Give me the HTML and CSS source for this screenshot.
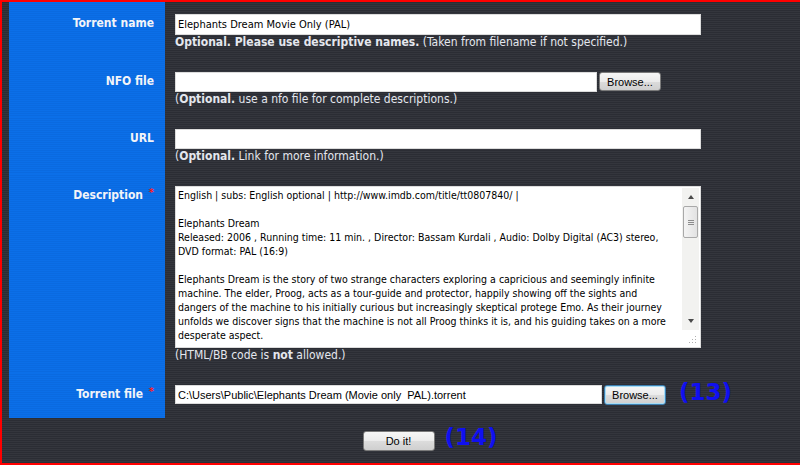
FILE: index.html
```html
<!DOCTYPE html>
<html lang="en">
<head>
    <meta charset="UTF-8">
    <title>Upload torrent</title>
    <link rel="stylesheet" href="styles.css">
</head>
<body>
    <div class="frame">
        <div class="upload">
            <div class="row">
                <div class="label">Torrent name</div>
                <div class="field">
                    <input type="text" class="text wide tall" value="Elephants Dream Movie Only (PAL)">
                    <div class="hint"><b>Optional. Please use descriptive names.</b> (Taken from filename if not specified.)</div>
                </div>
            </div>

            <div class="row">
                <div class="label">NFO file</div>
                <div class="field">
                    <div class="file-line">
                        <input type="text" class="text nfo" value="">
                        <button type="button" class="btn browse">Browse...</button>
                    </div>
                    <div class="hint">(<b>Optional.</b> use a nfo file for complete descriptions.)</div>
                </div>
            </div>

            <div class="row">
                <div class="label">URL</div>
                <div class="field">
                    <input type="text" class="text wide" value="">
                    <div class="hint">(<b>Optional.</b> Link for more information.)</div>
                </div>
            </div>

            <div class="row">
                <div class="label">Description <span class="req">*</span></div>
                <div class="field">
                    <div class="desc">
                        <div class="desc-text">
                            <div>English | subs: English optional | http://www.imdb.com/title/tt0807840/ |</div>
                            <div>&nbsp;</div>
                            <div>Elephants Dream</div>
                            <div>Released: 2006 , Running time: 11 min. , Director: Bassam Kurdali , Audio: Dolby Digital (AC3) stereo,</div>
                            <div>DVD format: PAL (16:9)</div>
                            <div>&nbsp;</div>
                            <div>Elephants Dream is the story of two strange characters exploring a capricious and seemingly infinite</div>
                            <div>machine. The elder, Proog, acts as a tour-guide and protector, happily showing off the sights and</div>
                            <div>dangers of the machine to his initially curious but increasingly skeptical protege Emo. As their journey</div>
                            <div>unfolds we discover signs that the machine is not all Proog thinks it is, and his guiding takes on a more</div>
                            <div>desperate aspect.</div>
                        </div>
                        <!-- fake scrollbar over the box -->
                        <div class="scrollbar">
                            <span class="arrow up"></span>
                            <span class="thumb"><i></i><i></i><i></i></span>
                            <span class="arrow down"></span>
                        </div>
                        <svg class="grip" width="9" height="9" viewBox="0 0 9 9">
                            <rect x="7" y="1" width="1" height="1" fill="#b0b0b0"/>
                            <rect x="4" y="4" width="1" height="1" fill="#b0b0b0"/>
                            <rect x="7" y="4" width="1" height="1" fill="#b0b0b0"/>
                            <rect x="1" y="7" width="1" height="1" fill="#b0b0b0"/>
                            <rect x="4" y="7" width="1" height="1" fill="#b0b0b0"/>
                            <rect x="7" y="7" width="1" height="1" fill="#b0b0b0"/>
                        </svg>
                    </div>
                    <div class="hint">(HTML/BB code is <b>not</b> allowed.)</div>
                </div>
            </div>

            <div class="row last">
                <div class="label">Torrent file <span class="req">*</span></div>
                <div class="field">
                    <div class="file-line">
                        <input type="text" class="text path" value="C:\Users\Public\Elephants Dream (Movie only  PAL).torrent">
                        <button type="button" class="btn browse focus">Browse...</button>
                        <span class="note">(13)</span>
                    </div>
                </div>
            </div>
        </div>

        <div class="submit-row">
            <div class="submit-wrap">
                <button type="button" class="btn do-it">Do it!</button>
                <span class="note note-14">(14)</span>
            </div>
        </div>
    </div>
</body>
</html>
```

FILE: styles.css
```css
html, body {
    margin: 0;
    padding: 0;
}
body {
    width: 800px;
    height: 465px;
    overflow: hidden;
    font-family: "DejaVu Sans Condensed", "DejaVu Sans", sans-serif;
}
.frame {
    box-sizing: border-box;
    height: 465px;
    border-top: 2px solid #ff0000;
    border-left: 2px solid #ff0000;
    border-bottom: 2px solid #ff0000;
    padding-left: 7px;
    background: repeating-linear-gradient(to bottom, #2b2d34 0, #2b2d34 1px, #34363d 1px, #34363d 2px);
}
.upload {
    display: flex;
    flex-direction: column;
}
.row {
    display: flex;
}
.label {
    box-sizing: border-box;
    width: 156px;
    flex: none;
    padding: 14px 11px 0 0;
    text-align: right;
    font-weight: bold;
    font-size: 12px;
    line-height: 15px;
    color: #f2f4f8;
    background: repeating-linear-gradient(to bottom, #0b6fe8 0, #0b6fe8 1px, #0a6ae0 1px, #0a6ae0 2px);
}
.req {
    position: relative;
    top: -3px;
    color: #ff1a1a;
    font-size: 11px;
    line-height: 0;
    margin-left: 2px;
}
.field {
    padding: 12px 0 10px 10px;
}
.row.last .field {
    padding-bottom: 12px;
}
.text {
    display: block;
    box-sizing: border-box;
    height: 20px;
    margin: 0;
    padding: 0 2px;
    border: 1px solid #dcdcdc;
    background: #fff;
    color: #000;
    font-family: "DejaVu Sans Condensed", "DejaVu Sans", sans-serif;
    font-size: 11px;
    outline: none;
}
.wide {
    width: 526px;
}
.tall {
    height: 21px;
}
.nfo {
    width: 422px;
}
.path {
    width: 427px;
    height: 19px;
    font-family: "Liberation Sans", Arial, sans-serif;
}
.file-line {
    display: flex;
    align-items: flex-start;
}
.hint {
    font-size: 12px;
    line-height: 15px;
    color: #e4e7ee;
    white-space: nowrap;
}
.btn {
    box-sizing: border-box;
    height: 19px;
    margin: 0;
    padding: 0;
    border: 1px solid #7a7a7a;
    border-radius: 3px;
    background: linear-gradient(to bottom, #f6f6f6 0%, #ebebeb 50%, #dcdcdc 51%, #cfcfcf 100%);
    color: #000;
    font-family: "Liberation Sans", Arial, sans-serif;
    font-size: 11px;
    cursor: pointer;
}
.browse {
    width: 62px;
    margin-left: 2px;
}
.browse.focus {
    border-color: #3c7fb1;
    box-shadow: inset 0 0 0 1px #a6dcf5;
    height: 20px;
}
.note {
    margin-left: 13px;
    margin-top: -6px;
    font-family: "DejaVu Sans", sans-serif;
    font-weight: bold;
    font-size: 23px;
    line-height: 27px;
    color: #1010f0;
}
.desc {
    position: relative;
    box-sizing: border-box;
    width: 526px;
    height: 162px;
    border: 1px solid #dcdcdc;
    background: #fff;
    overflow: hidden;
}
.desc-text {
    padding: 1px 0 0 2px;
    font-size: 10.5px;
    line-height: 14px;
    color: #000;
}
.desc-text div {
    white-space: nowrap;
}
.scrollbar {
    position: absolute;
    top: 1px;
    right: 1px;
    width: 17px;
    height: 142px;
    background: #f2f2f0;
    display: flex;
    flex-direction: column;
    align-items: center;
}
.arrow {
    width: 0;
    height: 0;
    border-left: 3px solid transparent;
    border-right: 3px solid transparent;
}
.arrow.up {
    margin-top: 7px;
    border-bottom: 4px solid #4a4a4a;
}
.arrow.down {
    margin-top: auto;
    margin-bottom: 7px;
    border-top: 4px solid #4a4a4a;
}
.thumb {
    box-sizing: border-box;
    width: 15px;
    height: 32px;
    margin-top: 7px;
    border: 1px solid #a9a9a9;
    border-radius: 2px;
    background: linear-gradient(to right, #f4f4f4, #e2e2e2);
    display: flex;
    flex-direction: column;
    justify-content: center;
    align-items: center;
    gap: 1px;
}
.thumb i {
    display: block;
    width: 6px;
    height: 1px;
    background: #8c8c8c;
}
.grip {
    position: absolute;
    right: 3px;
    bottom: 3px;
}
.submit-row {
    display: flex;
    justify-content: center;
    padding: 12px 12px 0 0;
}
.submit-wrap {
    position: relative;
}
.do-it {
    width: 72px;
    height: 20px;
}
.note-14 {
    position: absolute;
    left: 82px;
    top: -6px;
    margin: 0;
}
```
